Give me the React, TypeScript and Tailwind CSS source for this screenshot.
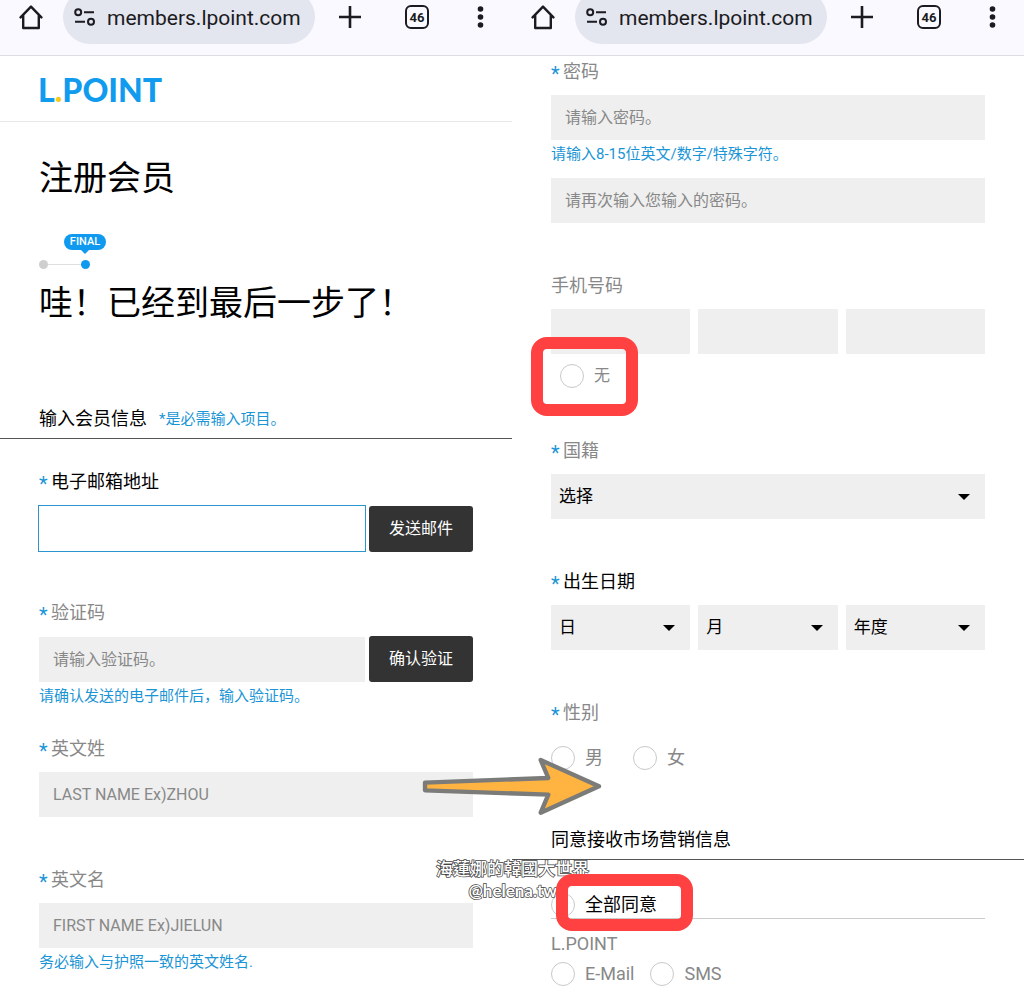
import type { ReactNode } from "react";

const field = "h-[45px] w-full min-w-0 bg-[#efefef] px-[14px] text-base text-black outline-none placeholder:text-[#888]";

function BrowserBar() {
  return (
    <header className="h-14 overflow-hidden border-b border-[#dddde2] bg-[#faf9ff]">
      <div className="-mt-[10px] flex h-[54px] items-center pr-[28px] pl-[19px] text-[#1b1b21]">
        <button type="button" aria-label="主页" className="mr-5">
          <svg width="24" height="26" viewBox="0 0 24 26" fill="none" stroke="currentColor" strokeWidth="2.4" strokeLinejoin="round" strokeLinecap="round">
            <path d="M1.6 13.4 12 2.6l10.4 10.8M4.2 11v13h15.6V11" />
          </svg>
        </button>
        <div className="flex h-full min-w-0 flex-1 items-center gap-[11px] rounded-full bg-[#e3e5ef] pl-[11px]">
          <svg className="shrink-0" width="22" height="18" viewBox="0 0 22 18" fill="none" stroke="currentColor" strokeWidth="2">
            <circle cx="4.2" cy="4.3" r="3" />
            <path d="M10 4.3h10M1 13.7h10" />
            <circle cx="17" cy="13.7" r="3" />
          </svg>
          <input aria-label="网址" readOnly value="members.lpoint.com" className="h-8 w-full min-w-0 bg-transparent pt-0.5 text-[21px] outline-none" />
        </div>
        <button type="button" aria-label="新标签页" className="ml-6">
          <svg width="22" height="22" viewBox="0 0 22 22" stroke="currentColor" strokeWidth="2.6">
            <path d="M11 0v22M0 11h22" />
          </svg>
        </button>
        <button type="button" aria-label="标签页" className="ml-11 flex h-6 w-6 items-center justify-center rounded-md border-2 border-current text-[13px] leading-none font-bold">
          46
        </button>
        <button type="button" aria-label="菜单" className="ml-12">
          <svg width="7" height="22" viewBox="0 0 7 22" fill="currentColor">
            <circle cx="3.5" cy="3" r="2.8" />
            <circle cx="3.5" cy="11" r="2.8" />
            <circle cx="3.5" cy="19" r="2.8" />
          </svg>
        </button>
      </div>
    </header>
  );
}

function Star() {
  return <span className="h-6 w-3 pt-0.5 text-xl leading-6 text-[#1b95d5]">*</span>;
}

function Label({ id, required = true, dark, children }: { id: string; required?: boolean; dark?: boolean; children: ReactNode }) {
  return (
    <label htmlFor={id} className={`mb-[11px] flex text-lg leading-6 ${dark ? "text-black" : "text-[#888]"}`}>
      {required && <Star />}
      {children}
    </label>
  );
}

function Hint({ children }: { children: ReactNode }) {
  return <p className="mt-1 text-[15px] leading-5 text-[#1b95d5]">{children}</p>;
}

function Select({ id, label, text }: { id: string; label?: string; text: string }) {
  return (
    <div className="relative">
      <select id={id} aria-label={label} className="h-[45px] w-full appearance-none bg-[#efefef] px-2 text-[17px] text-black">
        <option>{text}</option>
      </select>
      <svg className="pointer-events-none absolute top-5 right-[15px]" width="12" height="6" viewBox="0 0 12 6">
        <path d="M0 0h12L6 6z" />
      </svg>
    </div>
  );
}

function Radio({ name, dark, type = "radio", children }: { name: string; dark?: boolean; type?: string; children: ReactNode }) {
  return (
    <label className={`flex items-center gap-[10px] text-lg leading-6 ${dark ? "text-black" : "text-[#888]"}`}>
      <input type={type} name={name} className="h-6 w-6 appearance-none rounded-full border border-[#c9c9c9] bg-white checked:border-[#0f9af0] checked:bg-[#0f9af0]" />
      {children}
    </label>
  );
}

function DarkButton({ children }: { children: ReactNode }) {
  return (
    <button type="button" className="h-[46px] w-[104px] shrink-0 rounded-[3px] bg-[#333] text-base text-white">
      {children}
    </button>
  );
}

function AccountScreen() {
  return (
    <section className="min-w-0">
      <BrowserBar />
      <div className="flex h-[66px] items-center border-b border-[#e8e8e8] px-[38px] pt-0.5">
        <a href="#" className="font-[Lato] text-[32px] leading-9 font-black text-[#109bee]">
          L<span className="text-[#f8c81c]">.</span>POINT
        </a>
      </div>
      <form>
        <div className="px-[39px] pt-8">
          <h1 className="text-[34px] leading-[48px]">注册会员</h1>
          <div className="mt-8 flex w-[67px] flex-col items-end">
            <span className="flex h-4 w-[42px] items-center justify-center rounded-full bg-[#0f9af0] text-[11px] leading-4 font-medium text-white">FINAL</span>
            <svg className="mr-[17px]" width="8" height="4" viewBox="0 0 8 4">
              <path d="M0 0h8L4 4z" fill="#0f9af0" />
            </svg>
            <div className="mt-[6px] flex w-full items-center pr-4">
              <span className="h-[9px] w-[9px] rounded-full bg-[#cfcfcf]" />
              <span className="h-px flex-1 bg-[#dedede]" />
              <span className="h-[9px] w-[9px] rounded-full bg-[#0f9af0]" />
            </div>
          </div>
          <h2 className="mt-[10px] text-[34px] leading-[48px]">哇！已经到最后一步了！</h2>
        </div>
        <div className="mt-[78px] flex items-center gap-3 border-b border-[#555] px-[39px] pb-[5px]">
          <h3 className="text-lg leading-7">输入会员信息</h3>
          <span className="text-[15px] leading-7 text-[#1b95d5]">*是必需输入项目。</span>
        </div>
        <div className="px-[39px] pt-[31px]">
          <Label id="email" dark>电子邮箱地址</Label>
          <div className="flex items-center gap-[3px]">
            <input id="email" type="email" className="-ml-px h-[47px] min-w-0 flex-1 border border-[#2b95cf] bg-white px-[14px] outline-none" />
            <DarkButton>发送邮件</DarkButton>
          </div>
          <div className="mt-[49px]">
            <Label id="code">验证码</Label>
            <div className="flex items-center gap-1">
              <input id="code" className={field} placeholder="请输入验证码。" />
              <DarkButton>确认验证</DarkButton>
            </div>
            <Hint>请确认发送的电子邮件后，输入验证码。</Hint>
          </div>
          <div className="mt-[31px]">
            <Label id="last">英文姓</Label>
            <input id="last" className={field} placeholder="LAST NAME Ex)ZHOU" />
          </div>
          <div className="mt-[51px]">
            <Label id="first">英文名</Label>
            <input id="first" className={field} placeholder="FIRST NAME Ex)JIELUN" />
            <Hint>务必输入与护照一致的英文姓名.</Hint>
          </div>
        </div>
      </form>
    </section>
  );
}

function DetailsScreen() {
  return (
    <section className="min-w-0">
      <BrowserBar />
      <form>
        <div className="px-[39px] pt-1">
          <Label id="password">密码</Label>
          <input id="password" type="password" className={field} placeholder="请输入密码。" />
          <Hint>请输入8-15位英文/数字/特殊字符。</Hint>
          <input aria-label="再次输入密码" type="password" className={`${field} mt-[14px]`} placeholder="请再次输入您输入的密码。" />

          <div className="mt-[51px]">
            <Label id="phone" required={false}>手机号码</Label>
            <div className="grid grid-cols-3 gap-2">
              <input id="phone" type="tel" className={field} />
              <input aria-label="手机号码中段" type="tel" className={field} />
              <input aria-label="手机号码末段" type="tel" className={field} />
            </div>
            <div className="relative mt-[10px] ml-[9px] w-fit">
              <Radio name="no-phone" type="checkbox">
                <span className="text-base leading-6">无</span>
              </Radio>
              <div className="pointer-events-none absolute -top-[27px] -left-[29px] h-[79px] w-[107px] rounded-2xl border-12 border-[#ff4141]" />
            </div>
          </div>

          <div className="mt-[51px]">
            <Label id="nation">国籍</Label>
            <Select id="nation" text="选择" />
          </div>

          <div className="mt-[51px]">
            <Label id="day" dark>出生日期</Label>
            <div className="grid grid-cols-3 gap-2">
              <Select id="day" text="日" />
              <Select id="month" label="月" text="月" />
              <Select id="year" label="年度" text="年度" />
            </div>
          </div>

          <fieldset className="mt-[51px]">
            <legend className="mb-[21px] flex text-lg leading-6 text-[#888]">
              <Star />
              性别
            </legend>
            <div className="flex gap-[30px]">
              <Radio name="gender">男</Radio>
              <Radio name="gender">女</Radio>
            </div>
          </fieldset>
        </div>

        <h3 className="mt-14 border-b border-[#555] px-[39px] pb-[5px] text-lg leading-7">同意接收市场营销信息</h3>

        <div className="px-[39px]">
          <div className="relative border-b border-[#ccc] pt-[33px] pb-px">
            <Radio name="all" type="checkbox" dark>全部同意</Radio>
            <div className="pointer-events-none absolute top-[14px] left-[5px] z-20 h-[57px] w-[137px] rounded-2xl border-12 border-[#ff4141]" />
          </div>
          <p className="mt-[13px] text-lg leading-6 text-[#888]">L.POINT</p>
          <div className="mt-[6px] flex gap-4">
            <Radio name="email-consent" type="checkbox">E-Mail</Radio>
            <Radio name="sms-consent" type="checkbox">SMS</Radio>
          </div>
        </div>
      </form>
    </section>
  );
}

export default function App() {
  return (
    <main className="relative grid grid-cols-2 bg-white font-[Roboto,'Noto_Sans_CJK_SC',sans-serif] text-black">
      <AccountScreen />
      <DetailsScreen />

      <svg className="absolute top-[757px] left-1/2 -ml-[90px]" width="180" height="60" viewBox="0 0 540 180">
        <path d="M9 77 379 63 356 9 531 88 356 167 379 113 9 100Z" fill="#ffb340" stroke="#7b7b79" strokeWidth="13" strokeLinejoin="round" />
      </svg>

      <p className="absolute top-[857px] left-1/2 z-10 -ml-[76px] text-right font-['Noto_Sans_CJK_TC',sans-serif] text-[17px] leading-[22px] font-medium text-white [-webkit-text-stroke:1.5px_#444] [paint-order:stroke_fill]">
        海蓮娜的韓國大世界
        <br />
        <span className="mr-8 font-[Lato] font-bold">@helena.tw</span>
      </p>
    </main>
  );
}
